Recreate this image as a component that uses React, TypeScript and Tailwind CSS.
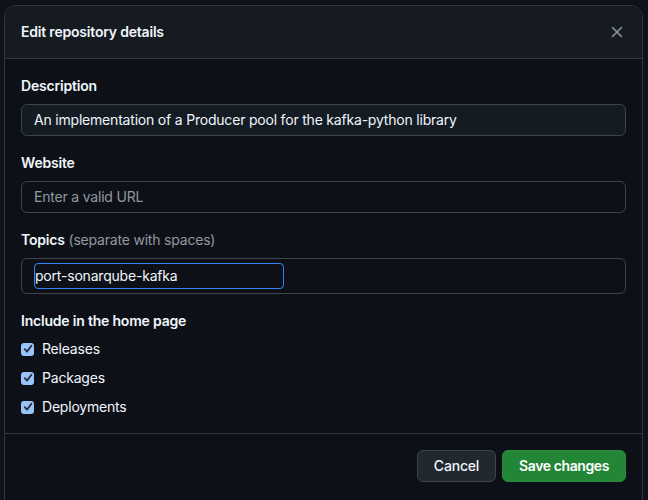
import React from "react";

function CheckRow({ label }: { label: string }) {
    return (
        <label className="flex items-center h-5 gap-2">
            <span className="w-[13px] h-[13px] rounded-[3px] bg-[#99c3fb] flex items-center justify-center">
                <svg width="10" height="10" viewBox="0 0 10 10">
                    <path d="M1.8 5.2 L4 7.6 L8.4 1.8" fill="none" stroke="#2b2f36" strokeWidth="1.8" strokeLinecap="round" strokeLinejoin="round" />
                </svg>
            </span>
            <span className="text-sm text-[#f0f6fc] tracking-[-0.2px]">{label}</span>
        </label>
    );
}

export default function App() {
    return (
        <div
            className="w-[648px] h-[500px] bg-[#0e131a] pt-[5px] pl-[4px] overflow-hidden"
            style={{ fontFamily: "Inter, 'Noto Sans', sans-serif" }}
        >
            <div className="w-[639px] h-[500px] rounded-t-xl border border-[#30363d] bg-[#0d1117] overflow-hidden">
                {/* header */}
                <div className="h-[53px] bg-[#161b22] border-b border-[#30363d] flex items-center justify-between px-4">
                    <h2 className="text-sm font-semibold text-[#f0f6fc] tracking-[-0.2px]">Edit repository details</h2>
                    <svg width="12" height="12" viewBox="0 0 12 12" className="mr-[3px]">
                        <path d="M1.5 1.5 L10.5 10.5 M10.5 1.5 L1.5 10.5" stroke="#9198a1" strokeWidth="1.5" strokeLinecap="round" />
                    </svg>
                </div>

                {/* body */}
                <div className="px-4 pt-[17px] pb-[16px] border-b border-[#30363d] tracking-[-0.2px]">
                    <div className="text-sm font-semibold text-[#f0f6fc] leading-5">Description</div>
                    <div className="mt-2 h-8 rounded-md border border-[#3d444d] bg-[#151b23] px-3 flex items-center text-sm text-[#f0f6fc]">
                        An implementation of a Producer pool for the kafka-python library
                    </div>

                    <div className="mt-[17px] text-sm font-semibold text-[#f0f6fc] leading-5">Website</div>
                    <div className="mt-2 h-8 rounded-md border border-[#3d444d] bg-[#0d1117] px-3 flex items-center text-sm text-[#9198a1]">
                        Enter a valid URL
                    </div>

                    <div className="mt-[17px] text-sm leading-5">
                        <span className="font-semibold text-[#f0f6fc]">Topics</span>{" "}
                        <span className="text-[#9198a1]">(separate with spaces)</span>
                    </div>
                    <div className="mt-2 h-9 rounded-md border border-[#3d444d] bg-[#0d1117] pl-3 flex items-center">
                        <div className="w-[250px] h-[26px] rounded-[4px] border-[1.5px] border-[#2f81f7] flex items-center text-sm text-[#f0f6fc]">
                            port-sonarqube-kafka
                        </div>
                    </div>

                    <div className="mt-[17px] text-sm font-semibold text-[#f0f6fc] leading-5">Include in the home page</div>
                    <div className="mt-2 flex flex-col gap-[9px]">
                        <CheckRow label="Releases" />
                        <CheckRow label="Packages" />
                        <CheckRow label="Deployments" />
                    </div>
                </div>

                {/* footer */}
                <div className="flex justify-end gap-[6px] p-4">
                    <button className="w-[79px] h-8 rounded-md border border-[#3d444d] bg-[#212830] text-sm font-medium text-[#f0f6fc] tracking-[-0.2px]">
                        Cancel
                    </button>
                    <button className="w-[124px] h-8 rounded-md border border-[#2f8a3e] bg-[#238636] text-sm font-semibold text-white tracking-[-0.4px]">
                        Save changes
                    </button>
                </div>
            </div>
        </div>
    );
}
